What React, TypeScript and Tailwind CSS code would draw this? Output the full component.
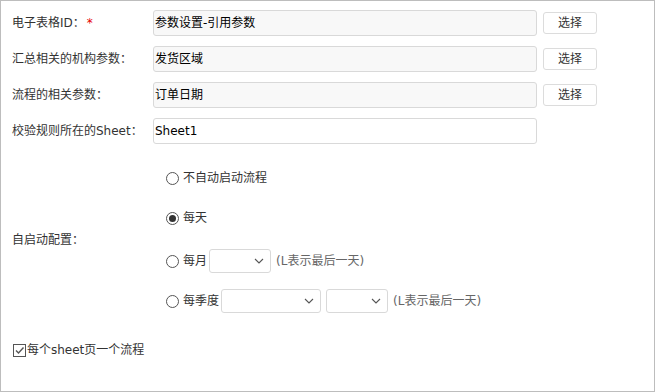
import React from 'react';

const font = {fontFamily: '"DejaVu Sans", "Noto Sans CJK SC", sans-serif'};

function Chevron() {
  return (
    <svg width="10" height="6" viewBox="0 0 10 6" className="text-[#555]">
      <path d="M1 1l4 4 4-4" fill="none" stroke="currentColor" strokeWidth="1.1" />
    </svg>
  );
}

function Select({width}: {width: string}) {
  return (
    <div className={`${width} h-[24px] border border-[#d9d9d9] rounded-[3px] bg-white flex items-center justify-end pr-[6px]`}>
      <Chevron />
    </div>
  );
}

function Radio({checked}: {checked?: boolean}) {
  return (
    <span className="w-[13px] h-[13px] rounded-full border border-[#555] bg-white flex items-center justify-center shrink-0">
      {checked && <span className="w-[7px] h-[7px] rounded-full bg-[#333]" />}
    </span>
  );
}

function FieldRow({label, value, readOnly, button, required}: {label: string; value: string; readOnly?: boolean; button?: boolean; required?: boolean}) {
  return (
    <div className="flex items-center h-[26px]">
      <div className="w-[152px] pl-[11px] text-[12px] text-[#333]">
        {label}
        {required && <span className="text-[#e60000] ml-[2px]">*</span>}
      </div>
      <div
        className={`w-[384px] h-[26px] border border-[#d9d9d9] rounded-[3px] pl-[1px] flex items-center text-[12px] text-black ${readOnly ? 'bg-[#f8f8f8]' : 'bg-white'}`}
      >
        {value}
      </div>
      {button && (
        <div className="ml-[6px] w-[54px] h-[22px] border border-[#dcdcdc] rounded-[3px] bg-white flex items-center justify-center text-[12px] text-[#333]">
          选择
        </div>
      )}
    </div>
  );
}

export default function App() {
  return (
    <div className="w-[655px] h-[392px] border border-[#bdbdbd] bg-white flex flex-col pt-[9px]" style={font}>
      <div className="flex flex-col gap-[10px]">
        <FieldRow label="电子表格ID：" required value="参数设置-引用参数" readOnly button />
        <FieldRow label="汇总相关的机构参数：" value="发货区域" readOnly button />
        <FieldRow label="流程的相关参数：" value="订单日期" readOnly button />
        <FieldRow label="校验规则所在的Sheet：" value="Sheet1" />
      </div>

      <div className="flex items-center mt-[22px]">
        <div className="w-[152px] pl-[11px] text-[12px] text-[#333]">自启动配置：</div>
        <div className="flex flex-col pl-[13px] text-[12px] text-[#333]">
          <div className="flex items-center h-[24px] gap-[4px]">
            <Radio />
            <span>不自动启动流程</span>
          </div>
          <div className="flex items-center h-[24px] gap-[4px] mt-[16px]">
            <Radio checked />
            <span>每天</span>
          </div>
          <div className="flex items-center h-[24px] gap-[4px] mt-[19px]">
            <Radio />
            <span>每月</span>
            <div className="-ml-[2px]">
              <Select width="w-[62px]" />
            </div>
            <span className="ml-[1px] text-[#666]">(L表示最后一天)</span>
          </div>
          <div className="flex items-center h-[24px] gap-[4px] mt-[16px]">
            <Radio />
            <span>每季度</span>
            <div className="-ml-[2px] flex gap-[5px]">
              <Select width="w-[100px]" />
              <Select width="w-[62px]" />
            </div>
            <span className="ml-[1px] text-[#666]">(L表示最后一天)</span>
          </div>
        </div>
      </div>

      <div className="flex items-center mt-[28px] pl-[12px] text-[12px] text-[#333]">
        <span className="w-[13px] h-[13px] border border-[#555] bg-white flex items-center justify-center shrink-0">
          <svg width="11" height="11" viewBox="0 0 11 11">
            <path d="M2 5.5l2.5 2.5L9.5 2.5" fill="none" stroke="#555" strokeWidth="1.4" />
          </svg>
        </span>
        <span className="ml-[1px]">每个sheet页一个流程</span>
      </div>
    </div>
  );
}
